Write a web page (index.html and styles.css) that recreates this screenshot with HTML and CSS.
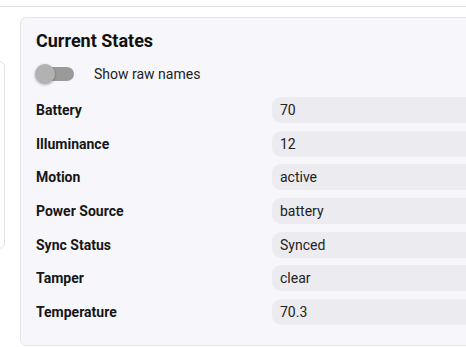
FILE: index.html
```html
<!DOCTYPE html>
<html lang="en">
<head>
  <meta charset="UTF-8" />
  <title>Device — Current States</title>
  <meta name="viewport" content="width=device-width, initial-scale=1.0" />
  <link rel="stylesheet" href="styles.css">
</head>
<body>
  <div class="topbar"></div>

  <div class="layout">
    <aside class="side-card"></aside>

    <section class="card">
      <h2>Current States</h2>

      <label class="toggle-row">
        <span class="switch">
          <span class="track"></span>
          <span class="thumb"></span>
        </span>
        <span class="toggle-label">Show raw names</span>
      </label>

      <div class="states">
        <div class="name">Battery</div><div class="value">70</div>
        <div class="name">Illuminance</div><div class="value">12</div>
        <div class="name">Motion</div><div class="value">active</div>
        <div class="name">Power Source</div><div class="value">battery</div>
        <div class="name">Sync Status</div><div class="value">Synced</div>
        <div class="name">Tamper</div><div class="value">clear</div>
        <div class="name">Temperature</div><div class="value">70.3</div>
      </div>
    </section>
  </div>
</body>
</html>
```

FILE: styles.css
```css
html, body {
  overflow: hidden;
}
body {
  margin: 0;
  font-family: Roboto, "Liberation Sans", Arial, sans-serif;
  background: #fff;
  color: #1c1c1e;
}
.topbar {
  height: 6px;
  border-bottom: 1px solid #dedede;
}
.layout {
  display: flex;
  align-items: flex-start;
  gap: 15px;
  padding-top: 10px;
}
.side-card {
  flex: none;
  box-sizing: border-box;
  width: 200px;
  height: 188px;
  margin-top: 44px;
  margin-left: -195px;
  background: #fff;
  border: 1px solid #e4e4e8;
  border-radius: 6px;
}
.card {
  flex: none;
  width: 520px;
  box-sizing: border-box;
  padding: 11px 15px 20px;
  background: #f7f7fb;
  border: 1px solid #e4e4ea;
  border-radius: 6px;
}
h2 {
  margin: 0;
  font-size: 18px;
  line-height: 24px;
  font-weight: 700;
  color: #111;
}
.toggle-row {
  display: flex;
  align-items: center;
  height: 24px;
  margin-top: 9px;
}
.switch {
  position: relative;
  width: 39px;
  height: 24px;
  margin-left: -1px;
}
.track {
  position: absolute;
  left: 5px;
  top: 5px;
  width: 34px;
  height: 14px;
  border-radius: 7px;
  background: #9a9a9a;
}
.thumb {
  position: absolute;
  left: 0;
  top: 2px;
  width: 20px;
  height: 20px;
  border-radius: 50%;
  background: #b2b2b2;
  box-shadow: 0 1px 3px rgba(0,0,0,0.3);
}
.toggle-label {
  margin-left: 20px;
  font-size: 14px;
  color: #222;
}
.states {
  display: grid;
  grid-template-columns: 236px 1fr;
  grid-auto-rows: 26px;
  row-gap: 7.67px;
  margin-top: 11px;
  font-size: 14px;
}
.name {
  display: flex;
  align-items: center;
  font-weight: 700;
  color: #161616;
}
.value {
  display: flex;
  align-items: center;
  padding-left: 8px;
  background: #ebebf0;
  border-radius: 9px;
  color: #222;
}
```
